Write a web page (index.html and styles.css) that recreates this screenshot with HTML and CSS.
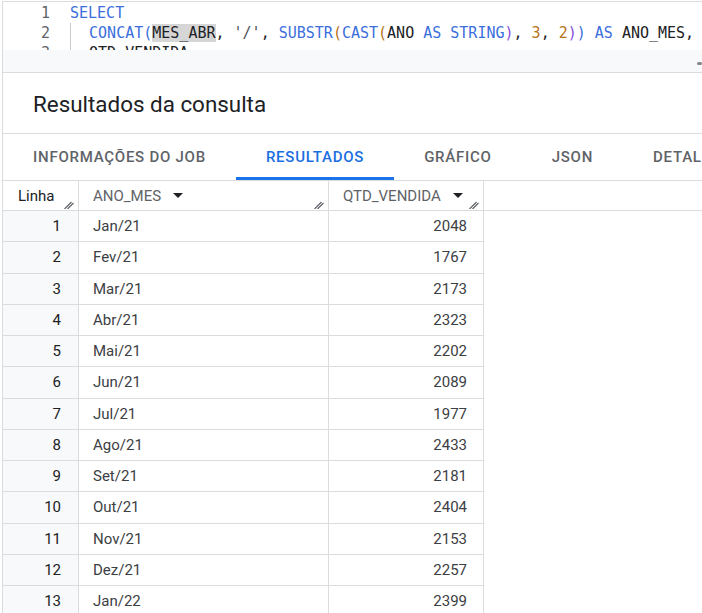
FILE: index.html
```html
<!DOCTYPE html>
<html lang="pt-BR">
<head>
<meta charset="utf-8">
<title>Resultados da consulta</title>
<link rel="stylesheet" href="styles.css">
</head>
<body>
<div class="frame">
  <div class="editor">
    <div class="code">
      <div class="gutter"><div>1</div><div>2</div><div>3</div></div>
      <div class="lines">
        <div class="ln"><span class="kw">SELECT</span></div>
        <div class="ln"><span class="ind">  </span><span class="fn">CONCAT</span><span class="b1">(</span><span class="sel">MES_ABR</span>, <span class="str">'/'</span>, <span class="fn">SUBSTR</span><span class="b2">(</span><span class="fn">CAST</span><span class="b2">(</span>ANO <span class="kw">AS</span> <span class="kw">STRING</span><span class="b3">)</span>, <span class="num">3</span>, <span class="num">2</span><span class="b3">)</span><span class="b1">)</span> <span class="kw">AS</span> ANO_MES,</div>
        <div class="ln"><span class="ind">  </span>QTD_VENDIDA</div>
      </div>
    </div>
    <div class="band"><span class="thumb"></span></div>
  </div>

  <div class="title">Resultados da consulta</div>

  <div class="tabs">
    <div class="tab">INFORMAÇÕES DO JOB</div>
    <div class="tab active">RESULTADOS</div>
    <div class="tab">GRÁFICO</div>
    <div class="tab">JSON</div>
    <div class="tab">DETALHES</div>
  </div>

  <div class="thead">
    <div class="hc c1"><span class="hl">Linha</span><svg class="grip" width="10" height="8" viewBox="0 0 10 8"><path d="M0.5 8L7.5 1M3.5 8L9.5 2" stroke="#5f6368" stroke-width="1.2" fill="none"/></svg></div>
    <div class="hc c2"><span>ANO_MES</span><span class="arrow"></span><svg class="grip" width="10" height="8" viewBox="0 0 10 8"><path d="M0.5 8L7.5 1M3.5 8L9.5 2" stroke="#5f6368" stroke-width="1.2" fill="none"/></svg></div>
    <div class="hc c3"><span>QTD_VENDIDA</span><span class="arrow"></span><svg class="grip" width="10" height="8" viewBox="0 0 10 8"><path d="M0.5 8L7.5 1M3.5 8L9.5 2" stroke="#5f6368" stroke-width="1.2" fill="none"/></svg></div>
  </div>

  <div class="tbody">
    <div class="row"><div class="c1 num-cell">1</div><div class="c2">Jan/21</div><div class="c3 val">2048</div></div>
    <div class="row"><div class="c1 num-cell">2</div><div class="c2">Fev/21</div><div class="c3 val">1767</div></div>
    <div class="row"><div class="c1 num-cell">3</div><div class="c2">Mar/21</div><div class="c3 val">2173</div></div>
    <div class="row"><div class="c1 num-cell">4</div><div class="c2">Abr/21</div><div class="c3 val">2323</div></div>
    <div class="row"><div class="c1 num-cell">5</div><div class="c2">Mai/21</div><div class="c3 val">2202</div></div>
    <div class="row"><div class="c1 num-cell">6</div><div class="c2">Jun/21</div><div class="c3 val">2089</div></div>
    <div class="row"><div class="c1 num-cell">7</div><div class="c2">Jul/21</div><div class="c3 val">1977</div></div>
    <div class="row"><div class="c1 num-cell">8</div><div class="c2">Ago/21</div><div class="c3 val">2433</div></div>
    <div class="row"><div class="c1 num-cell">9</div><div class="c2">Set/21</div><div class="c3 val">2181</div></div>
    <div class="row"><div class="c1 num-cell">10</div><div class="c2">Out/21</div><div class="c3 val">2404</div></div>
    <div class="row"><div class="c1 num-cell">11</div><div class="c2">Nov/21</div><div class="c3 val">2153</div></div>
    <div class="row"><div class="c1 num-cell">12</div><div class="c2">Dez/21</div><div class="c3 val">2257</div></div>
    <div class="row"><div class="c1 num-cell">13</div><div class="c2">Jan/22</div><div class="c3 val">2399</div></div>
  </div>
</div>
</body>
</html>
```

FILE: styles.css
```css
* { box-sizing: border-box; }

html, body { height: 100%; }

body {
  margin: 0;
  padding: 1px 0 0 2px;
  background: #ffffff;
  font-family: Roboto, "Liberation Sans", Arial, sans-serif;
  color: #202124;
  overflow: hidden;
}

.frame {
  border-top: 1px solid #dadce0;
  border-left: 1px solid #dadce0;
  height: 620px;
}

/* ---------- editor ---------- */
.code {
  height: 48px;
  overflow: hidden;
  display: flex;
  padding-top: 1px;
  font-family: "DejaVu Sans Mono", "Liberation Mono", monospace;
  font-size: 15px;
  line-height: 20px;
  color: #202124;
}

.gutter {
  width: 47px;
  text-align: right;
  color: #5f6368;
}

.lines {
  margin-left: 20px;
}

.ln {
  white-space: pre;
}

.ind {
  display: inline-block;
  border-left: 1px solid #c8cacd;
}

.kw, .fn { color: #3c6fdc; }
.b1 { color: #3c6fdc; }
.b2 { color: #b8741a; }
.b3 { color: #8a4fd8; }
.num { color: #b8741a; }
.str { color: #4d5156; }
.sel { background: #d6d6d6; }

.band {
  height: 23px;
  background: #f8f9fa;
  border-bottom: 1px solid #dadce0;
  position: relative;
}

.thumb {
  position: absolute;
  right: 0;
  top: 12px;
  width: 5px;
  height: 3px;
  border-radius: 2px;
  background: #80868b;
}

/* ---------- title ---------- */
.title {
  height: 61px;
  border-bottom: 1px solid #dadce0;
  display: flex;
  align-items: center;
  padding-left: 30px;
  padding-top: 1px;
  font-size: 22.4px;
  color: #202124;
}

/* ---------- tabs ---------- */
.tabs {
  height: 47px;
  border-bottom: 1px solid #dadce0;
  display: flex;
  white-space: nowrap;
  overflow: hidden;
}

.tab {
  position: relative;
  display: flex;
  align-items: center;
  padding: 0 30px;
  font-size: 15px;
  font-weight: 500;
  letter-spacing: 0.75px;
  color: #5f6368;
}

.tab.active { color: #1a6fe0; }

.tab.active::after {
  content: "";
  position: absolute;
  left: 0;
  right: 0;
  bottom: 0;
  height: 3px;
  background: #1a73e8;
}

/* ---------- table ---------- */
.thead {
  display: flex;
  height: 30px;
  border-bottom: 1px solid #dadce0;
}

.c1 { width: 76px; border-right: 1px solid #dadce0; }
.c2 { width: 250px; border-right: 1px solid #dadce0; }
.c3 { width: 155px; border-right: 1px solid #dadce0; }

.hc {
  position: relative;
  display: flex;
  align-items: center;
  padding-left: 14px;
  font-size: 15px;
  color: #5f6368;
}

.hc.c1 { padding-left: 15px; }
.hl { color: #202124; }

.arrow {
  margin-left: 12px;
  width: 0;
  height: 0;
  border-left: 5px solid transparent;
  border-right: 5px solid transparent;
  border-top: 5px solid #202124;
}

.grip {
  position: absolute;
  right: 4px;
  bottom: 1px;
}

.row {
  display: flex;
  width: 481px;
  height: 31.25px;
  border-bottom: 1px solid #dadce0;
  font-size: 15px;
  color: #3c4043;
}

.row > div {
  display: flex;
  align-items: center;
}

.row .c2 { padding-left: 14px; }

.num-cell {
  justify-content: flex-end;
  padding-right: 17px;
  background: #f8f9fa;
  color: #202124;
}

.val {
  justify-content: flex-end;
  padding-right: 16px;
}
```
